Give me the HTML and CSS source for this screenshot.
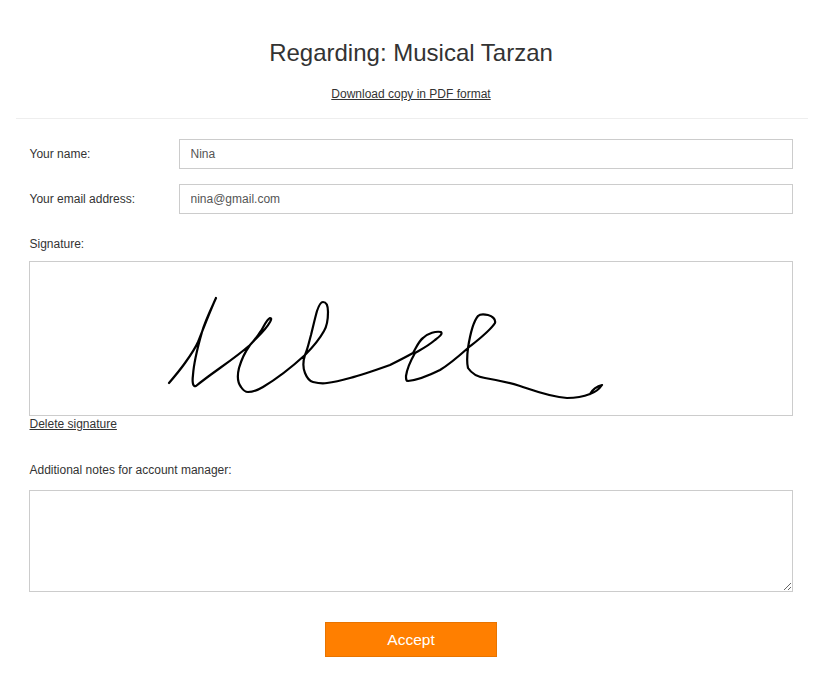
FILE: index.html
```html
<!DOCTYPE html>
<html lang="en">
<head>
  <meta charset="UTF-8" />
  <title>Regarding: Musical Tarzan</title>
  <link rel="stylesheet" href="styles.css">
</head>
<body>
  <div class="page">
    <div class="header">
      <h1>Regarding: Musical Tarzan</h1>
      <a href="#" class="link">Download copy in PDF format</a>
    </div>

    <form class="form">
      <div class="row">
        <label class="row-label" for="name">Your name:</label>
        <input class="field" id="name" type="text" value="Nina">
      </div>
      <div class="row">
        <label class="row-label" for="email">Your email address:</label>
        <input class="field" id="email" type="text" value="nina@gmail.com">
      </div>

      <div class="block-label signature-label">Signature:</div>
      <div class="signature">
        <svg viewBox="30 262 762 153" width="762" height="153">
          <path class="stroke" d="M169 383 C175 376 180 370 185 363 C190 356 195 349 198 342 C204 327 210 311 216 298 C211 309 205 321 202 332 C198 346 194 360 193 375 C192 383 193 387 196 386 C213 372 233 360 250 345 C255 340 258 335 261 331 C264 326 267 319 270 318 C272 318 271 320 270 322 C265 331 257 337 250 345 C245 352 241 361 239 368 C237 376 238 383 241 387 C243 390 245 392 248 392 C253 392 258 390 263 387 C278 378 293 366 305 355 C308 348 309 342 311 335 C313 327 315 318 317 311 C319 305 321 302 323 302 C327 302 328 306 328 312 C328 320 327 326 324 331 C319 340 312 348 305 355 C303 361 303 368 305 373 C307 378 309 381 313 382 C317 383 322 384 327 383 C336 382 343 380 350 378 C362 375 376 370 390 365 C398 361 406 357 413 353 C417 346 419 341 423 338 C428 333 436 331 441 332 C443 334 439 337 435 340 C428 346 422 349 415 353 C411 360 407 369 406 376 C406 379 406 381 408 381 C418 380 430 375 440 370 C450 364 459 356 468 348 C478 340 490 331 495 323 C496 319 492 316 488 315 C484 314 480 314 478 316 C473 322 470 335 468 348 C467 356 467 364 468 368 C472 374 478 377 485 378 C497 380 510 383 520 386 C535 391 550 397 567 398 C577 398 585 396 590 394 C596 392 600 388 602 385 C597 386 592 390 590 394" />
        </svg>
      </div>
      <a href="#" class="link delete-link">Delete signature</a>

      <div class="block-label notes-label">Additional notes for account manager:</div>
      <textarea class="notes"></textarea>

      <div class="actions">
        <button type="button" class="accept-btn">Accept</button>
      </div>
    </form>
  </div>
</body>
</html>
```

FILE: styles.css
```css
body {
  margin: 0;
  font-family: "Liberation Sans", Arial, sans-serif;
  font-size: 12px;
  color: #333;
  background-color: #fff;
}

.page {
  padding: 0 14px 0 16px;
}

.header {
  text-align: center;
  border-bottom: 1px solid #eee;
  padding: 39px 2px 17px 0;
}

h1 {
  font-size: 24px;
  font-weight: normal;
  line-height: 28px;
  margin: 0 0 20px;
  color: #333;
}

.link {
  color: #333;
  text-decoration: underline;
  line-height: 14px;
  display: inline-block;
}

.form {
  padding: 20px 15px 0 13px;
}

.row {
  display: flex;
  align-items: center;
  margin-bottom: 15px;
}

.row-label {
  width: 150px;
  padding-left: 0.5px;
  box-sizing: border-box;
}

.field {
  flex: 1;
  min-width: 0;
  box-sizing: border-box;
  height: 30px;
  padding: 0 11px 0 10.5px;
  border: 1px solid #ccc;
  border-radius: 0;
  font-family: inherit;
  font-size: 12px;
  color: #555;
  outline: none;
}

.block-label {
  line-height: 14px;
  padding-left: 0.5px;
}

.signature-label {
  margin-top: 23px;
  margin-bottom: 10px;
}

.signature {
  border: 1px solid #ccc;
  height: 153px;
}

.stroke {
  fill: none;
  stroke: #000;
  stroke-width: 2.2;
  stroke-linejoin: round;
  stroke-linecap: round;
}

.signature svg {
  display: block;
}

.delete-link {
  margin-top: 1px;
  margin-left: 0.5px;
}

.notes-label {
  margin-top: 32px;
  margin-bottom: 13px;
}

.notes {
  display: block;
  box-sizing: border-box;
  width: 100%;
  height: 102px;
  border: 1px solid #ccc;
  border-radius: 0;
  outline: none;
}

.actions {
  text-align: center;
  margin-top: 30px;
}

.accept-btn {
  width: 172px;
  height: 35px;
  background-color: #ff7f00;
  border: 1px solid #e87400;
  border-radius: 0;
  color: #fff;
  font-family: inherit;
  font-size: 15.5px;
  padding: 1px 0 0;
}
```
